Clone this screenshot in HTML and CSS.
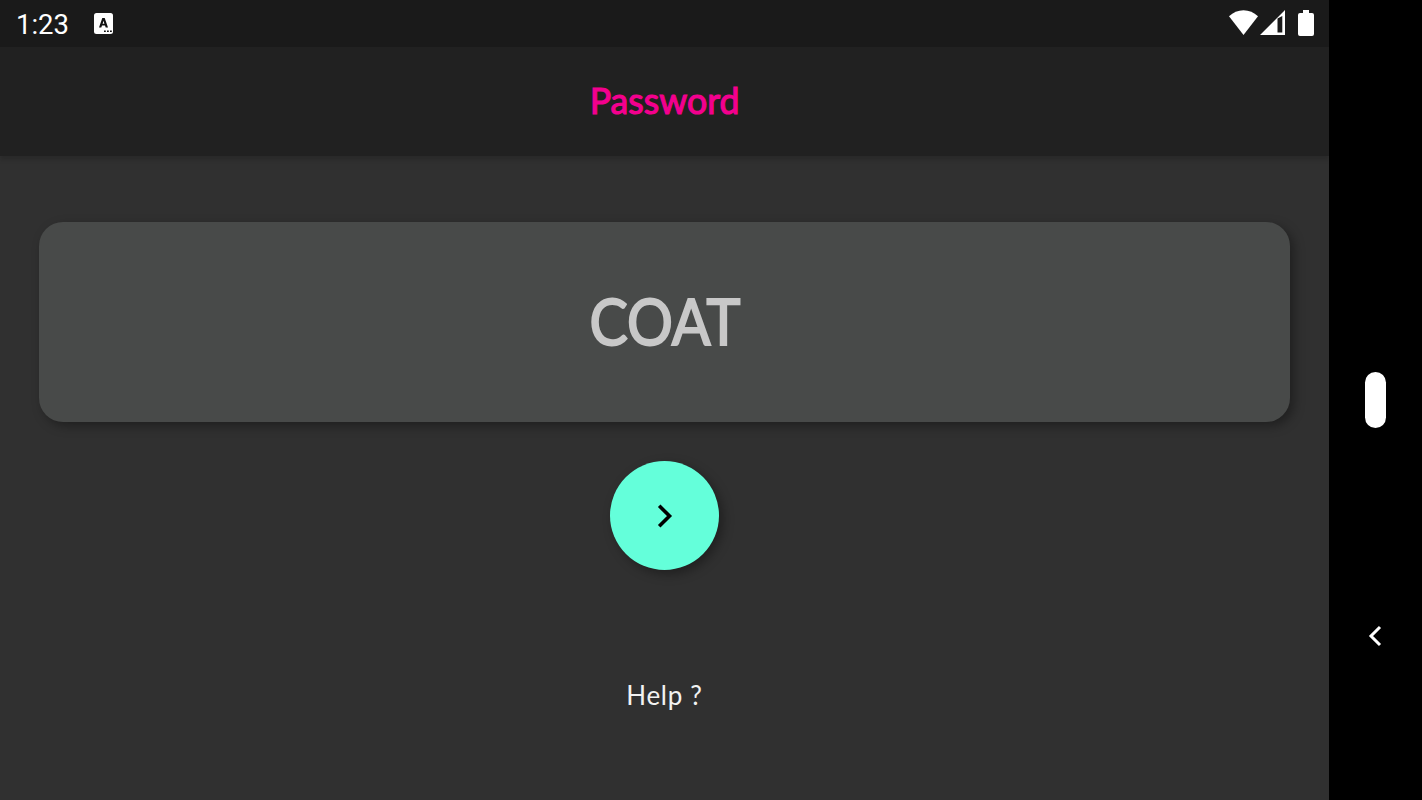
FILE: index.html
```
<!DOCTYPE html>
<html lang="en">
    <head>
        <title>Password</title>
        <meta charset="UTF-8">
        <meta name="viewport" content="width=device-width, initial-scale=1.0">
        <link rel="stylesheet" href="styles.css">
    </head>
    <body>
        <div class="app">
            <div class="status-bar">
                <span class="clock">1:23</span>
                <svg class="notification" viewBox="0 0 19 21">
                    <rect width="19" height="21" rx="2.5" fill="#fff"/>
                    <path d="M5 14.5 L8.3 5 H10.7 L14 14.5 H11.7 L11 12.5 H8 L7.3 14.5 Z M8.6 10.8 H10.4 L9.5 7.8 Z" fill="#111" fill-rule="evenodd"/>
                    <path d="M10 17.5h1.8v1.5h-1.8z M13 17.5h1.8v1.5h-1.8z M16 17.5h1.8v1.5h-1.8z" fill="#111"/>
                </svg>
                <div class="status-icons">
                    <svg class="wifi" width="29" height="25" viewBox="0 0 30 25" preserveAspectRatio="none">
                        <path d="M0 6.3 Q6.5 0.3 15 0.3 Q23.5 0.3 30 6.3 L15 25 Z" fill="#fff"/>
                    </svg>
                    <svg class="signal" width="25" height="25" viewBox="0 0 25 25">
                        <path d="M0 25 L25 0 V25 Z M17.5 8.5 V22.5 H22.3 V6 Z" fill="#fff" fill-rule="evenodd"/>
                    </svg>
                    <svg class="battery" width="16" height="26" viewBox="0 0 16 26">
                        <path d="M5 0 H11 V3 H14 Q16 3 16 5 V24 Q16 26 14 26 H2 Q0 26 0 24 V5 Q0 3 2 3 H5 Z" fill="#fff"/>
                    </svg>
                </div>
            </div>
            <div class="toolbar">
                <h1 class="title">Password</h1>
            </div>
            <div class="content">
                <div class="card"><span class="word">COAT</span></div>
                <button class="next" aria-label="Next">
                    <svg width="16" height="24" viewBox="0 0 16 24">
                        <path d="M2.2 1.8 L12.5 12 L2.2 22.2" fill="none" stroke="#000" stroke-width="3.6"/>
                    </svg>
                </button>
                <div class="help">Help ?</div>
            </div>
        </div>
        <div class="nav-bar">
            <div class="home"></div>
            <svg class="back" width="14" height="22" viewBox="0 0 14 22">
                <path d="M12 2 L3 11 L12 20" fill="none" stroke="#fff" stroke-width="3"/>
            </svg>
        </div>
    </body>
</html>
```

FILE: styles.css
```
body {
    display: flex;
    height: 100vh;
    margin: 0;
    overflow: hidden;
    background-color: #000;
    font-family: 'Lato', sans-serif;
}

.app {
    display: flex;
    flex-direction: column;
    width: 1329px;
    background-color: #303030;
}

.status-bar {
    display: flex;
    align-items: center;
    box-sizing: border-box;
    height: 47px;
    padding: 0 15px 1px 16px;
    background-color: #1a1a1a;
}

.clock {
    width: 78px;
    padding-top: 4px;
    font-family: 'Roboto', sans-serif;
    font-size: 27.5px;
    line-height: 44px;
    color: #fff;
}

.notification {
    width: 19px;
    height: 21px;
}

.status-icons {
    display: flex;
    align-items: center;
    margin-left: auto;
}

.wifi {
    margin-bottom: 2px;
}

.signal {
    margin: 0 0 1px 2px;
}

.battery {
    margin-left: 13px;
}

.toolbar {
    display: flex;
    align-items: center;
    justify-content: center;
    height: 109px;
    background-color: #212121;
    box-shadow: 0 4px 4px rgba(0, 0, 0, 0.14);
}

.title {
    margin: 0 0 3px;
    font-size: 37px;
    font-weight: normal;
    line-height: 48px;
    color: #f3008e;
    -webkit-text-stroke: 1.2px #f3008e;
    transform: scaleX(0.965);
}

.content {
    display: flex;
    flex-direction: column;
    align-items: center;
    padding: 66px 39px 0;
}

.card {
    display: flex;
    align-items: center;
    justify-content: center;
    width: 100%;
    height: 200px;
    border-radius: 24px;
    background-color: #484a49;
    box-shadow: 4px 4px 11px rgba(0, 0, 0, 0.35);
}

.word {
    margin-bottom: 2px;
    font-size: 63px;
    font-weight: normal;
    line-height: 80px;
    color: #c8c8c8;
    -webkit-text-stroke: 2px #c8c8c8;
    transform: scaleX(0.91);
}

.next {
    display: flex;
    align-items: center;
    justify-content: center;
    width: 109px;
    height: 109px;
    margin-top: 39px;
    padding: 0;
    border: 0;
    border-radius: 50%;
    background-color: #64ffda;
    box-shadow: 4px 4px 11px rgba(0, 0, 0, 0.35);
}

.help {
    margin-top: 105px;
    font-size: 26px;
    line-height: 40px;
    letter-spacing: 0.7px;
    color: #f2f2f2;
}

.nav-bar {
    display: flex;
    flex: 1;
    flex-direction: column;
    align-items: center;
}

.home {
    width: 21px;
    height: 56px;
    margin-top: 372px;
    border-radius: 11px;
    background-color: #fff;
}

.back {
    margin: 197px 2px 0 0;
}
```
